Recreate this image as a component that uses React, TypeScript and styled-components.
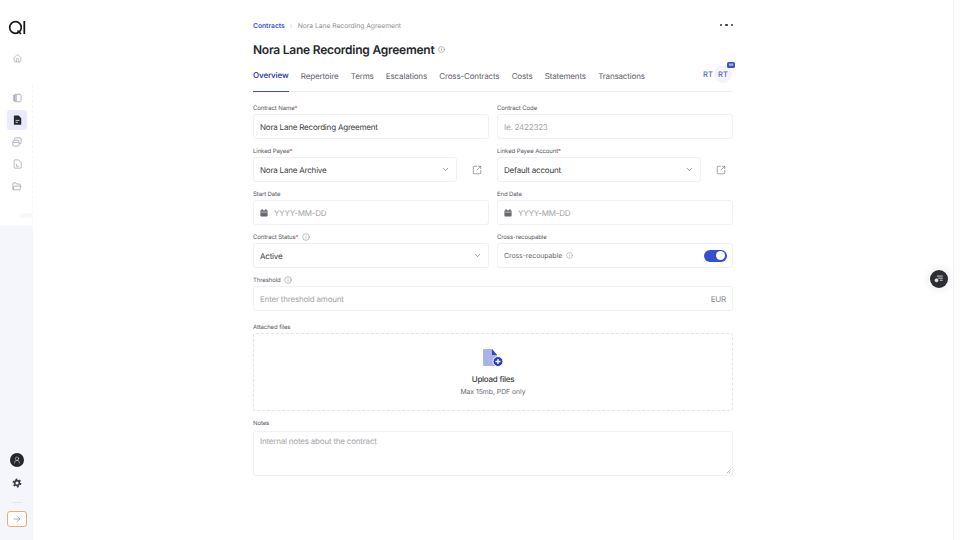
import { ArrowRight, ChevronDown, ChevronRight, Home, Info, SquareArrowOutUpRight, UserRound } from 'lucide-react'
import styled, { createGlobalStyle } from 'styled-components'

const GlobalStyle = createGlobalStyle`
  html, body {
    margin: 0;
    height: 100%;
    overflow: hidden;
    background: #fff;
    font-family: Inter, "Liberation Sans", sans-serif;
    color: #2b2d33;
    text-rendering: geometricPrecision;
  }
  * {
    box-sizing: border-box;
  }
`

const Shell = styled.div`
  display: flex;
  width: 960px;
  height: 540px;
`

const Sidebar = styled.aside`
  position: relative;
  width: 33px;
  flex: none;
  padding: 20px 0 13px 1px;
  display: flex;
  flex-direction: column;
  align-items: center;
  background: linear-gradient(to bottom, #ffffff 0, #ffffff 225px, #f5f6fb 226px);

  &::before {
    content: '';
    position: absolute;
    left: 20px;
    top: 213px;
    width: 12px;
    height: 5px;
    background: #f7f8fc;
  }

  &::after {
    content: '';
    position: absolute;
    right: 0;
    top: 85px;
    bottom: 0;
    border-right: 1px dashed #f5f6f9;
  }
`

const Logo = styled.svg`
  width: 18px;
  height: 15px;
`

const HomeButton = styled.div`
  width: 20px;
  height: 20px;
  margin-top: 13px;
  display: flex;
  align-items: center;
  justify-content: center;
  color: #9a9da6;
`

const NavGroup = styled.div`
  display: flex;
  flex-direction: column;
  align-items: center;
  gap: 2px;
  margin-top: 20px;
`

const NavButton = styled.div<{ $active?: boolean }>`
  width: 20px;
  height: 20px;
  border-radius: 3px;
  display: flex;
  align-items: center;
  justify-content: center;
  background: ${p => (p.$active ? '#e9ecf8' : 'transparent')};
`

const Spacer = styled.div`
  flex: 1;
`

const Avatar = styled.div`
  width: 14px;
  height: 14px;
  border-radius: 50%;
  background: #25272c;
  color: #e6e6e6;
  display: flex;
  align-items: center;
  justify-content: center;
`

const GearWrap = styled.div`
  margin-top: 11px;
  height: 10px;
  display: flex;
`

const SideRule = styled.div`
  width: 10px;
  height: 1px;
  background: #e6e7ec;
  margin: 14px 0 8px;
`

const ExpandButton = styled.div`
  width: 20px;
  height: 16px;
  border: 1.3px solid #dfb36f;
  border-radius: 3px;
  background: #fff;
  color: #75777f;
  display: flex;
  align-items: center;
  justify-content: center;
`

const Main = styled.main`
  flex: 1;
  display: flex;
  justify-content: center;
`

const Content = styled.div`
  width: 480px;
  padding-top: 18px;
`

const TopRow = styled.div`
  display: flex;
  align-items: center;
  justify-content: space-between;
  height: 14px;
`

const Crumbs = styled.nav`
  display: flex;
  align-items: center;
  gap: 3.5px;
  padding-top: 1px;
  font-size: 6.7px;
  color: #8b8d94;
`

const CrumbLink = styled.span`
  color: #3d50c4;
  font-weight: 600;
`

const Dots = styled.div`
  display: flex;
  gap: 3px;
`

const Dot = styled.span`
  width: 2.5px;
  height: 2.5px;
  border-radius: 50%;
  background: #33353b;
`

const TitleRow = styled.div`
  display: flex;
  align-items: center;
  gap: 4px;
  margin-top: 10px;
  height: 15px;
`

const Title = styled.h1`
  margin: 0;
  font-size: 12px;
  font-weight: 600;
  letter-spacing: -0.24px;
  color: #26282d;
  white-space: nowrap;
`

const TabBar = styled.div`
  display: flex;
  align-items: center;
  gap: 12.3px;
  margin-top: 2px;
  height: 33px;
  border-bottom: 1px solid #eeeff2;
`

const Tab = styled.div<{ $active?: boolean }>`
  height: 33px;
  display: flex;
  align-items: center;
  font-size: 8px;
  letter-spacing: -0.16px;
  font-weight: ${p => (p.$active ? 600 : 400)};
  color: ${p => (p.$active ? '#3246b8' : '#5f6169')};
  white-space: nowrap;
  border-bottom: ${p => (p.$active ? '1px solid #3d50c4' : 'none')};
  margin-bottom: -1px;
`

const Presence = styled.div`
  margin-left: auto;
  margin-right: 1px;
  display: flex;
  align-items: center;
  margin-bottom: 2px;
`

const PresenceChip = styled.div<{ $halo?: boolean }>`
  position: relative;
  width: ${p => (p.$halo ? '18px' : '12px')};
  height: 18px;
  display: flex;
  align-items: center;
  justify-content: center;
  font-size: 7.5px;
  font-weight: 500;
  color: #5463b8;
  border-radius: 50%;
  background: ${p => (p.$halo ? '#f4f5fa' : 'transparent')};
`

const PresenceBadge = styled.span`
  position: absolute;
  top: -3px;
  right: -3px;
  width: 8px;
  height: 6px;
  border-radius: 1.5px;
  background: #3d50c4;
  color: #fff;
  font-size: 3.5px;
  line-height: 6px;
  text-align: center;
`

const Form = styled.div`
  display: grid;
  grid-template-columns: 236px 236px;
  column-gap: 8px;
  row-gap: 5px;
  margin-top: 9px;
`

const Field = styled.div<{ $wide?: boolean; $spaced?: boolean }>`
  grid-column: ${p => (p.$wide ? '1 / -1' : 'auto')};
  margin-top: ${p => (p.$spaced ? '4px' : '0')};
  min-width: 0;
`

const Label = styled.div`
  display: flex;
  align-items: center;
  gap: 3px;
  height: 13px;
  padding-top: 1.5px;
  font-size: 6px;
  letter-spacing: -0.1px;
  color: #55575e;
  white-space: nowrap;
`

const Required = styled.span`
  color: #d9534f;
  margin-left: -3px;
`

const InfoIcon = styled(Info)`
  color: #77797f;
`

const Control = styled.div`
  flex: 1;
  height: 25px;
  min-width: 0;
  padding: 0 6px;
  display: flex;
  align-items: center;
  gap: 4px;
  border: 1px solid #f0f1f4;
  border-radius: 3px;
  background: #fff;
  font-size: 8px;
  letter-spacing: -0.2px;
  white-space: nowrap;
  color: #3a3c43;
`

const ControlRow = styled.div`
  display: flex;
  align-items: center;
`

const LinkOut = styled.div`
  width: 32px;
  flex: none;
  display: flex;
  justify-content: flex-end;
  padding-right: 7px;
  color: #6f7178;
`

const Placeholder = styled.span`
  color: #a3a5ab;
`

const DatePlaceholder = styled(Placeholder)`
  margin-left: 2px;
`

const Grow = styled.span`
  flex: 1;
`

const Muted = styled.span`
  color: #666870;
  font-size: 7px;
  letter-spacing: -0.1px;
`

const Caret = styled(ChevronDown)`
  color: #777981;
`

const Toggle = styled.div`
  width: 23px;
  height: 12px;
  margin-right: -1px;
  padding: 1.5px 2px;
  border-radius: 6px;
  background: #3550cf;
  display: flex;
  justify-content: flex-end;
`

const Knob = styled.span`
  width: 9px;
  height: 9px;
  border-radius: 50%;
  background: #fff;
`

const Suffix = styled.span`
  color: #85878e;
`

const DropZone = styled.div`
  height: 78px;
  border: 1px dashed #e4e5e9;
  border-radius: 3px;
  display: flex;
  flex-direction: column;
  align-items: center;
  padding-top: 15px;
`

const UploadTitle = styled.div`
  margin-top: 7px;
  font-size: 8px;
  font-weight: 500;
  letter-spacing: -0.25px;
  color: #3a3c43;
`

const UploadHint = styled.div`
  margin-top: 2.5px;
  font-size: 6.8px;
  color: #66686f;
`

const NotesBox = styled.div`
  position: relative;
  height: 45px;
  margin-top: 2px;
  padding: 4px 6px;
  border: 1px solid #f0f1f4;
  border-radius: 3px;
  font-size: 8px;
  letter-spacing: -0.2px;
  color: #a3a5ab;
`

const ResizeHandle = styled.svg`
  position: absolute;
  right: 1px;
  bottom: 1px;
  width: 5px;
  height: 5px;
`

const FloatButton = styled.div`
  position: absolute;
  left: 930px;
  top: 270px;
  width: 18px;
  height: 18px;
  border-radius: 50%;
  background: #2c2e33;
  box-shadow: 0 0 6px 3px rgba(0, 0, 0, 0.06);
  display: flex;
  align-items: center;
  justify-content: center;
`

const ScrollEdge = styled.div`
  width: 7px;
  flex: none;
  border-left: 1px solid #f2f2f4;
  background: #fdfdfd;
`

function PanelIcon() {
  return (
    <svg width="10" height="10" viewBox="0 0 12 12" fill="none">
      <path d="M1 2.500 6 1.500v9l-5-1z" fill="#c5c7ce" />
      <rect x="3" y="1.500" width="8" height="9" rx="1.500" stroke="#a5a7af" />
    </svg>
  )
}

function DocFilledIcon() {
  return (
    <svg width="9" height="10" viewBox="0 0 12 13" fill="none">
      <path d="M2 .5h5.500L11 4v8a.8.8 0 0 1-.8.8H2a.8.8 0 0 1-.8-.8V1.300A.8.8 0 0 1 2 .5z" fill="#26282e" />
      <path d="M3.500 7h5M3.500 9.500h3" stroke="#fff" strokeWidth="1" />
    </svg>
  )
}

function StackIcon() {
  return (
    <svg width="10" height="10" viewBox="0 0 12 12" fill="none" stroke="#a5a7af">
      <rect x="1" y="4" width="7.500" height="7" rx="1.500" />
      <path d="M3 3.500V2.500A1.500 1.500 0 0 1 4.500 1H9.500A1.500 1.500 0 0 1 11 2.500V6.500A1.500 1.500 0 0 1 9 8" />
      <path d="M1 6.500h7.500" />
    </svg>
  )
}

function DocOutlineIcon() {
  return (
    <svg width="9" height="10" viewBox="0 0 12 13" fill="none" stroke="#a5a7af">
      <path d="M2.500 1h5L11 4.500V11a1 1 0 0 1-1 1H2.500a1 1 0 0 1-1-1V2a1 1 0 0 1 1-1z" />
      <path d="M4.500 6.500v3h3" />
    </svg>
  )
}

function FolderIcon() {
  return (
    <svg width="10" height="9" viewBox="0 0 12 11" fill="none" stroke="#a5a7af">
      <path d="M1 9V2a1 1 0 0 1 1-1h2.500l1 1.500H9a1 1 0 0 1 1 1V5" />
      <path d="M1 9.500 2.500 5h8.500L9.500 9.500z" />
    </svg>
  )
}

function GearIcon() {
  return (
    <svg width="10" height="10" viewBox="0 0 12 12" fill="none" stroke="#3b3d44">
      <circle cx="6" cy="6" r="2.800" strokeWidth="2" />
      <circle cx="6" cy="6" r="4.500" strokeWidth="1.600" strokeDasharray="2.300 2.400" />
    </svg>
  )
}

function CalendarIcon() {
  return (
    <svg width="8" height="8" viewBox="0 0 10 10" fill="#66686f">
      <rect x="0.500" y="1.500" width="9" height="8" rx="1" />
      <rect x="2" y="0" width="1.300" height="2.500" />
      <rect x="6.700" y="0" width="1.300" height="2.500" />
      <rect x="1.500" y="3.500" width="7" height="0.700" fill="#fff" />
    </svg>
  )
}

function UploadIcon() {
  return (
    <svg width="21" height="18" viewBox="0 0 21 18">
      <path d="M1 0h8l5 6v11H1a1 1 0 0 1-1-1V1a1 1 0 0 1 1-1z" fill="#a9b2ea" />
      <path d="M9 0l5 6H9z" fill="#3246b8" />
      <circle cx="15" cy="12.500" r="5" fill="#2c3fae" stroke="#fff" />
      <path d="M15 10v5M12.500 12.500h5" stroke="#fff" strokeWidth="1.300" />
    </svg>
  )
}

function FloatIcon() {
  return (
    <svg width="10" height="10" viewBox="0 0 12 12" fill="none" stroke="#e8e8e8">
      <path d="M3.500 2.500h7M5 5h5.500M7 7.500h3.500" />
      <circle cx="3" cy="7.500" r="1.800" fill="#e8e8e8" />
    </svg>
  )
}

const tabs = ['Repertoire', 'Terms', 'Escalations', 'Cross-Contracts', 'Costs', 'Statements', 'Transactions']

export default function App() {
  return (
    <>
      <GlobalStyle />
      <Shell>
        <Sidebar>
          <Logo viewBox="0 0 18 15" fill="none" stroke="#17181b">
            <circle cx="7.500" cy="7.500" r="5.800" strokeWidth="1.700" />
            <path d="M9.500 10.500 13 14" strokeWidth="1.700" />
            <path d="M16.300 1v13" strokeWidth="1.800" />
          </Logo>
          <HomeButton>
            <Home size={9} strokeWidth={1.6} />
          </HomeButton>
          <NavGroup>
            <NavButton><PanelIcon /></NavButton>
            <NavButton $active><DocFilledIcon /></NavButton>
            <NavButton><StackIcon /></NavButton>
            <NavButton><DocOutlineIcon /></NavButton>
            <NavButton><FolderIcon /></NavButton>
          </NavGroup>
          <Spacer />
          <Avatar>
            <UserRound size={8} strokeWidth={1.6} />
          </Avatar>
          <GearWrap>
            <GearIcon />
          </GearWrap>
          <SideRule />
          <ExpandButton>
            <ArrowRight size={10} strokeWidth={1.4} />
          </ExpandButton>
        </Sidebar>

        <Main>
          <Content>
            <TopRow>
              <Crumbs>
                <CrumbLink>Contracts</CrumbLink>
                <ChevronRight size={6} color="#b0b2b8" />
                <span>Nora Lane Recording Agreement</span>
              </Crumbs>
              <Dots>
                <Dot />
                <Dot />
                <Dot />
              </Dots>
            </TopRow>

            <TitleRow>
              <Title>Nora Lane Recording Agreement</Title>
              <Info size={7} color="#8b8d94" />
            </TitleRow>

            <TabBar>
              <Tab $active>Overview</Tab>
              {tabs.map(t => (
                <Tab key={t}>{t}</Tab>
              ))}
              <Presence>
                <PresenceChip>RT</PresenceChip>
                <PresenceChip $halo>
                  RT
                  <PresenceBadge>56</PresenceBadge>
                </PresenceChip>
              </Presence>
            </TabBar>

            <Form>
              <Field>
                <Label>Contract Name<Required>*</Required></Label>
                <Control>Nora Lane Recording Agreement</Control>
              </Field>
              <Field>
                <Label>Contract Code</Label>
                <Control><Placeholder>Ie. 2422323</Placeholder></Control>
              </Field>

              <Field>
                <Label>Linked Payee<Required>*</Required></Label>
                <ControlRow>
                  <Control>
                    Nora Lane Archive
                    <Grow />
                    <Caret size={9} />
                  </Control>
                  <LinkOut><SquareArrowOutUpRight size={10} strokeWidth={1.5} /></LinkOut>
                </ControlRow>
              </Field>
              <Field>
                <Label>Linked Payee Account<Required>*</Required></Label>
                <ControlRow>
                  <Control>
                    Default account
                    <Grow />
                    <Caret size={9} />
                  </Control>
                  <LinkOut><SquareArrowOutUpRight size={10} strokeWidth={1.5} /></LinkOut>
                </ControlRow>
              </Field>

              <Field>
                <Label>Start Date</Label>
                <Control>
                  <CalendarIcon />
                  <DatePlaceholder>YYYY-MM-DD</DatePlaceholder>
                </Control>
              </Field>
              <Field>
                <Label>End Date</Label>
                <Control>
                  <CalendarIcon />
                  <DatePlaceholder>YYYY-MM-DD</DatePlaceholder>
                </Control>
              </Field>

              <Field>
                <Label>Contract Status<Required>*</Required> <InfoIcon size={8} strokeWidth={1.4} /></Label>
                <Control>
                  Active
                  <Grow />
                  <Caret size={9} />
                </Control>
              </Field>
              <Field>
                <Label>Cross-recoupable</Label>
                <Control>
                  <Muted>Cross-recoupable</Muted>
                  <InfoIcon size={7} strokeWidth={1.4} />
                  <Grow />
                  <Toggle><Knob /></Toggle>
                </Control>
              </Field>

              <Field $wide>
                <Label>Threshold <InfoIcon size={8} strokeWidth={1.4} /></Label>
                <Control>
                  <Placeholder>Enter threshold amount</Placeholder>
                  <Grow />
                  <Suffix>EUR</Suffix>
                </Control>
              </Field>

              <Field $wide $spaced>
                <Label>Attached files</Label>
                <DropZone>
                  <UploadIcon />
                  <UploadTitle>Upload files</UploadTitle>
                  <UploadHint>Max 15mb, PDF only</UploadHint>
                </DropZone>
              </Field>

              <Field $wide>
                <Label>Notes</Label>
                <NotesBox>
                  Internal notes about the contract
                  <ResizeHandle viewBox="0 0 5 5" stroke="#8b8d94" strokeWidth="0.600">
                    <path d="M0.500 4.500 4.500 0.500M2.500 4.500 4.500 2.500" />
                  </ResizeHandle>
                </NotesBox>
              </Field>
            </Form>
          </Content>
        </Main>
        <ScrollEdge />
        <FloatButton>
          <FloatIcon />
        </FloatButton>
      </Shell>
    </>
  )
}
